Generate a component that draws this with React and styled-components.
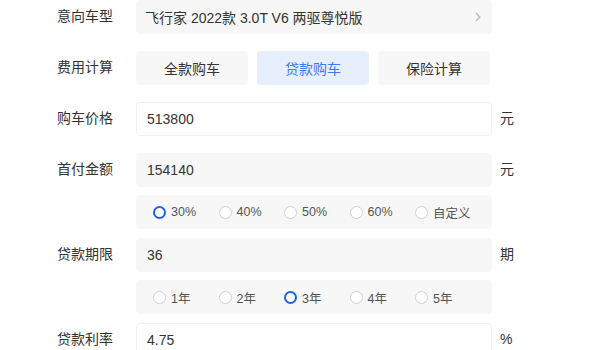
import React, { useState } from 'react';
import styled, { createGlobalStyle, css } from 'styled-components';

const GlobalStyle = createGlobalStyle`
	body {
		margin: 0;
		background: #fff;
		font-family: 'Liberation Sans', 'Noto Sans CJK SC', sans-serif;
		color: #333;
	}
`;

const downOptions = [ '30%', '40%', '50%', '60%', '自定义' ];
const yearOptions = [ '1年', '2年', '3年', '4年', '5年' ];
const payModes = [ '全款购车', '贷款购车', '保险计算' ];

const App = () => {
	const [ payMode, setPayMode ] = useState(1);
	const [ down, setDown ] = useState(0);
	const [ year, setYear ] = useState(2);

	return (
		<Form>
			<GlobalStyle />
			<Row>
				<Label>意向车型</Label>
				<SelectBox>
					<span>飞行家 2022款 3.0T V6 两驱尊悦版</span>
					<Chevron viewBox="0 0 8 12">
						<path d="M2 2 L5.8 6 L2 10" fill="none" stroke="#bdbdbd" strokeWidth="1.5" />
					</Chevron>
				</SelectBox>
			</Row>
			<Row>
				<Label>费用计算</Label>
				<ButtonGroup>
					{payModes.map((mode, idx) => (
						<ModeButton key={mode} active={payMode === idx} onClick={() => setPayMode(idx)}>
							{mode}
						</ModeButton>
					))}
				</ButtonGroup>
			</Row>
			<Row>
				<Label>购车价格</Label>
				<Field bordered>513800</Field>
				<Unit>元</Unit>
			</Row>
			<Row tight>
				<Label>首付金额</Label>
				<Field>154140</Field>
				<Unit>元</Unit>
			</Row>
			<OptionRow>
				<Options>
					{downOptions.map((opt, idx) => (
						<Option key={opt} onClick={() => setDown(idx)}>
							<Radio checked={down === idx} />
							{opt}
						</Option>
					))}
				</Options>
			</OptionRow>
			<Row tight>
				<Label>贷款期限</Label>
				<Field>36</Field>
				<Unit>期</Unit>
			</Row>
			<OptionRow>
				<Options>
					{yearOptions.map((opt, idx) => (
						<Option key={opt} onClick={() => setYear(idx)}>
							<Radio checked={year === idx} />
							{opt}
						</Option>
					))}
				</Options>
			</OptionRow>
			<Row>
				<Label>贷款利率</Label>
				<Field bordered>4.75</Field>
				<Unit>%</Unit>
			</Row>
		</Form>
	);
};

const Form = styled.div`
	width: 600px;
	display: flex;
	flex-direction: column;
`;

const Row = styled.div`
	display: grid;
	grid-template-columns: 136px 356px auto;
	align-items: center;
	height: 34px;
	margin-bottom: ${props => (props.tight ? '8px' : '17px')};
`;

const Label = styled.div`
	padding-left: 57px;
	font-size: 14px;
	line-height: 1;
	color: #333;
	margin-top: -2px;
`;

const boxBase = css`
	box-sizing: border-box;
	height: 34px;
	border-radius: 4px;
	display: flex;
	align-items: center;
	font-size: 14px;
	color: #333;
`;

const SelectBox = styled.div`
	${boxBase};
	background: #f7f7f7;
	padding: 0 10px 0 9px;
	justify-content: space-between;
`;

const Chevron = styled.svg`
	width: 8px;
	height: 12px;
`;

const ButtonGroup = styled.div`
	display: grid;
	grid-template-columns: repeat(3, 112px);
	column-gap: 9px;
`;

const ModeButton = styled.div`
	${boxBase};
	justify-content: center;
	cursor: pointer;
	background: ${props => (props.active ? '#e7effd' : '#f7f7f7')};
	color: ${props => (props.active ? '#3c7bf0' : '#333')};
`;

const Field = styled.div`
	${boxBase};
	padding-left: 10px;
	background: ${props => (props.bordered ? '#fff' : '#f7f7f7')};
	border: 1px solid ${props => (props.bordered ? '#f0f0f0' : '#f7f7f7')};
`;

const Unit = styled.div`
	padding-left: 8px;
	font-size: 14px;
	line-height: 1;
	color: #333;
	margin-top: -2px;
`;

const OptionRow = styled.div`
	display: grid;
	grid-template-columns: 136px 356px;
	margin-bottom: 9px;

	& > * {
		grid-column: 2;
	}
`;

const Options = styled.div`
	${boxBase};
	background: #f7f7f7;
	padding-left: 17px;
	display: grid;
	grid-template-columns: repeat(5, 65.5px);
`;

const Option = styled.label`
	display: flex;
	align-items: center;
	gap: 5px;
	font-size: 12.5px;
	color: #555;
	cursor: pointer;
`;

const Radio = styled.span`
	box-sizing: border-box;
	width: 13px;
	height: 13px;
	border-radius: 50%;
	background: #fff;
	border: ${props => (props.checked ? '2.5px solid #1d63e0' : '1px solid #cfcfcf')};
`;

export default App;
